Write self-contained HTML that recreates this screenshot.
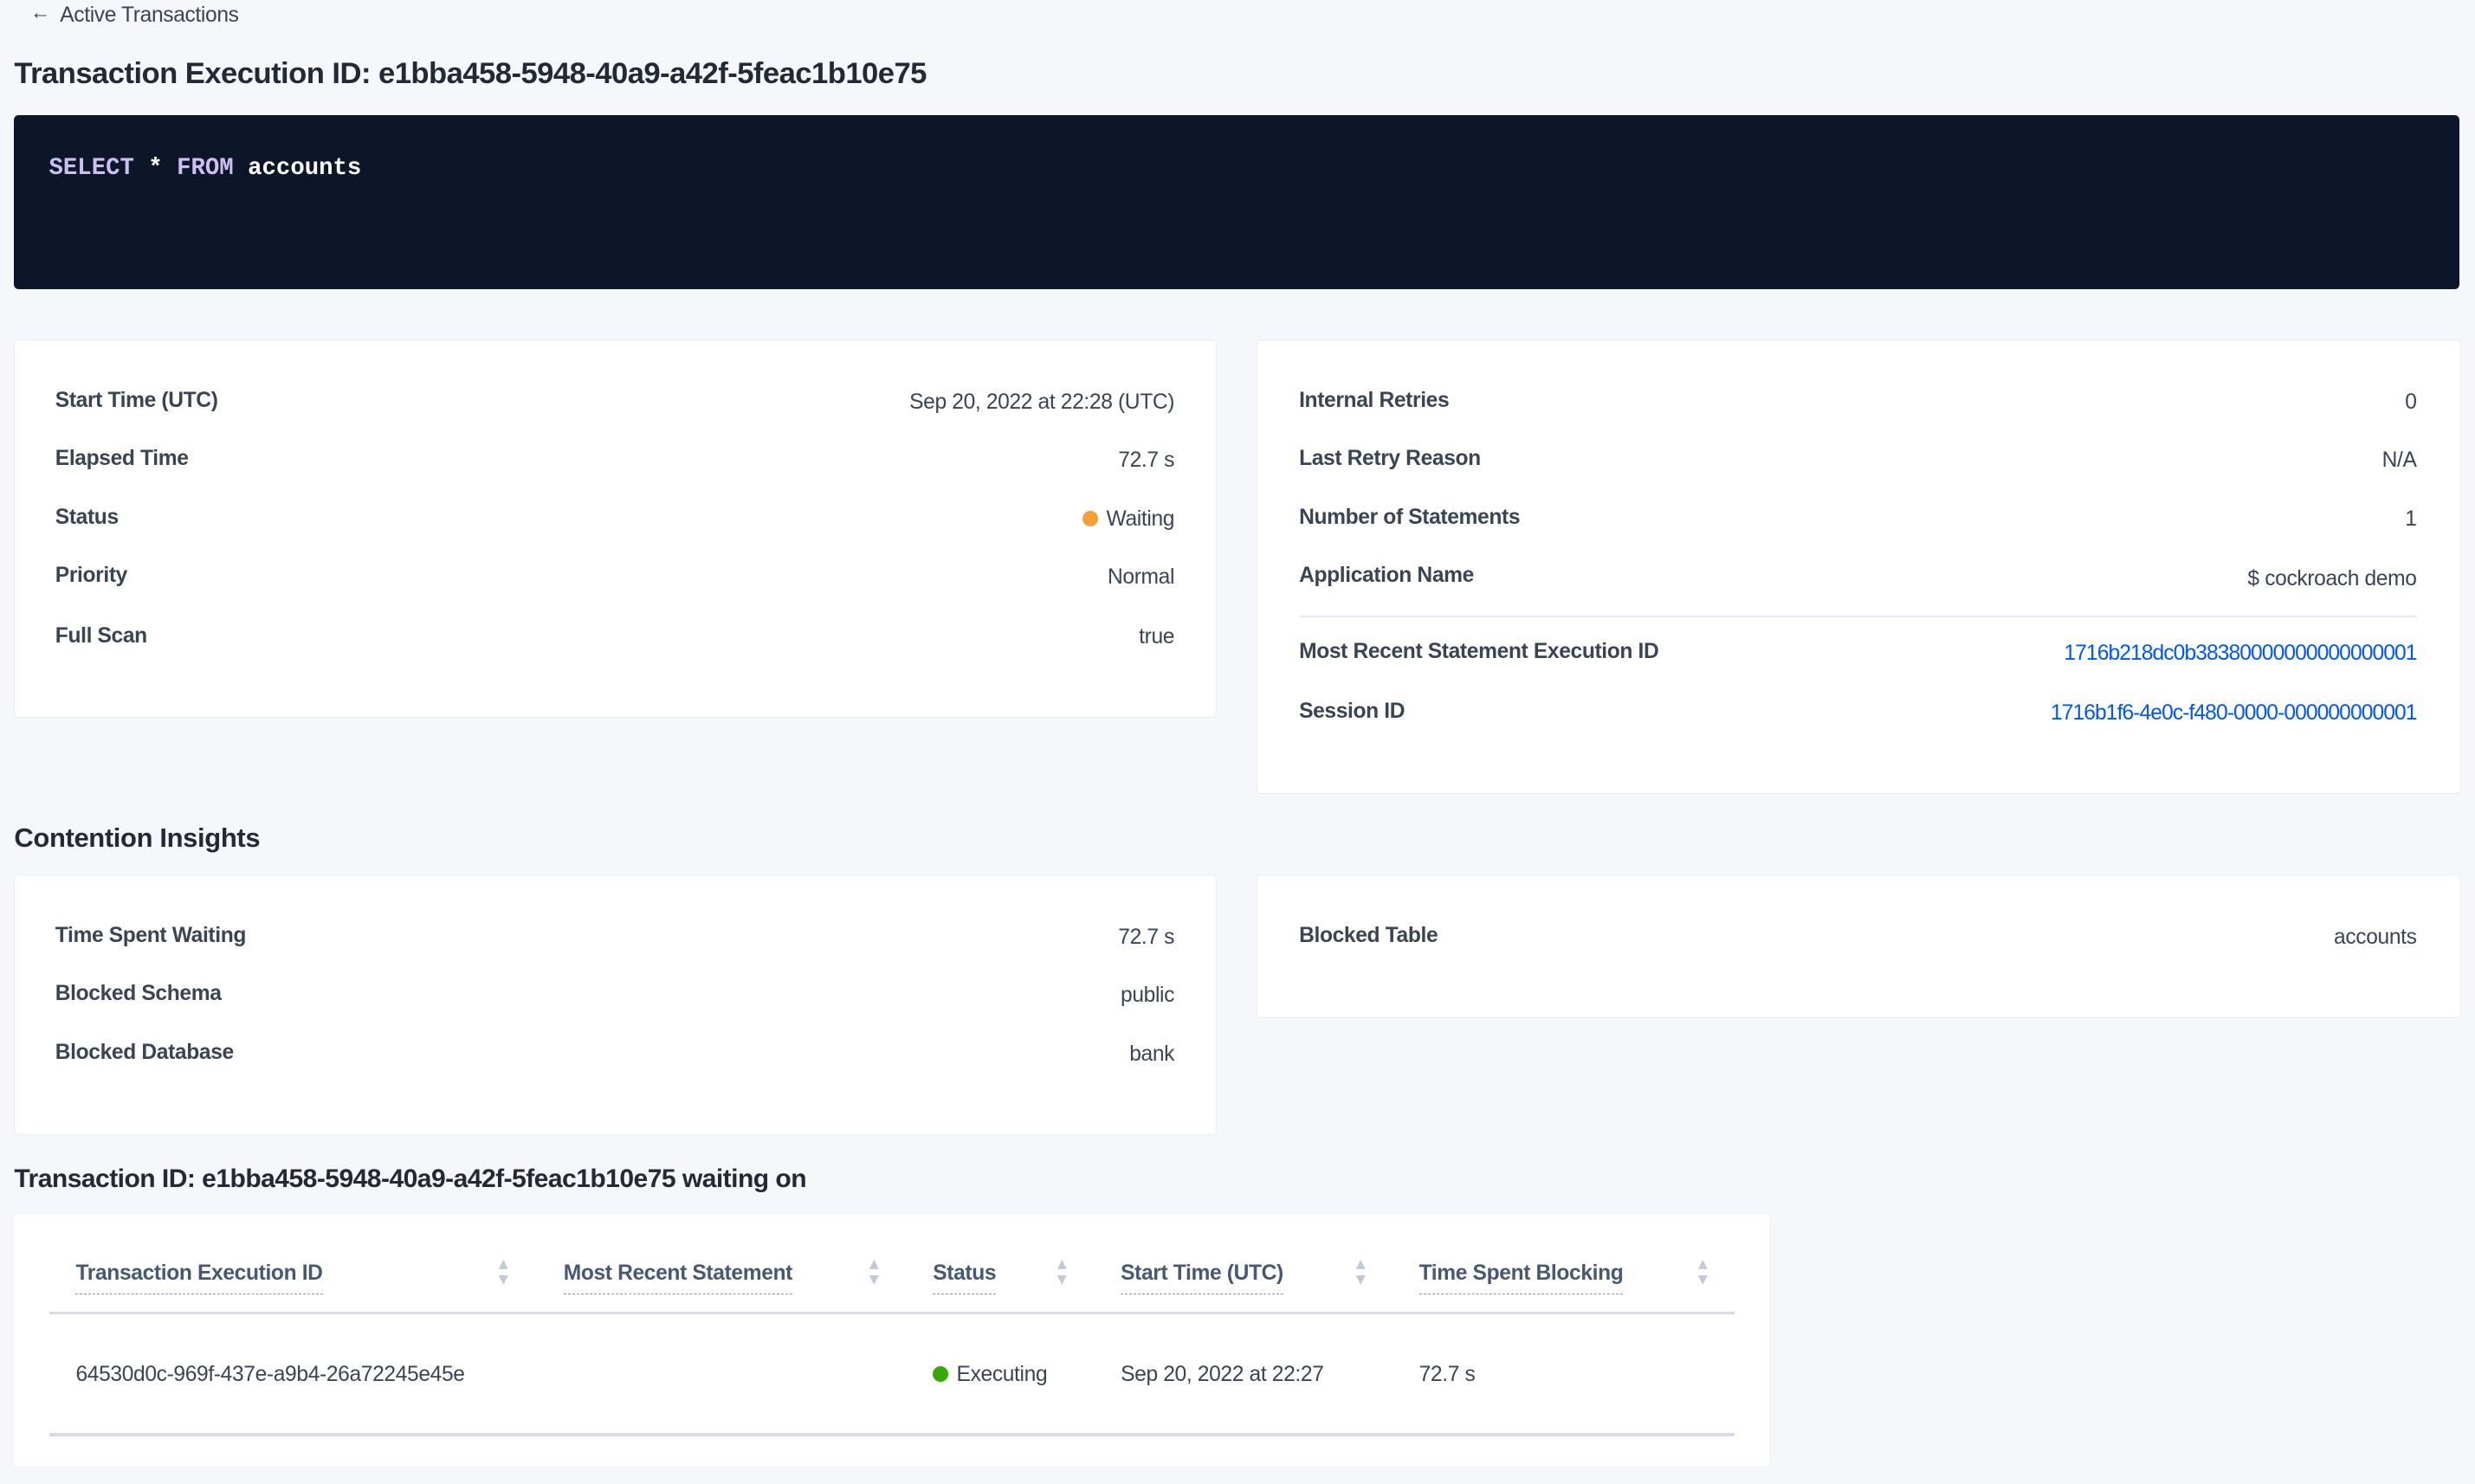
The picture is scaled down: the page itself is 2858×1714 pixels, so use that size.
<!DOCTYPE html>
<html><head><meta charset="utf-8"><style>
html,body{margin:0;padding:0;background:#f5f7fa;}
#w{position:relative;width:1568px;height:940px;zoom:1.82270;font-family:"Liberation Sans",sans-serif;color:#394455;overflow:hidden;}
.a{position:absolute;}
.card{position:absolute;background:#fff;border:1px solid #e7ecf3;border-radius:3px;box-sizing:border-box;}
.lb{position:absolute;font-size:13.5px;font-weight:bold;color:#394455;transform:translateY(-50%);white-space:nowrap;letter-spacing:-0.2px}
.vl{position:absolute;font-size:13.5px;color:#394455;transform:translateY(-50%);white-space:nowrap;text-align:right;letter-spacing:-0.2px}
.lnk{color:#0055ff}
.th{position:absolute;font-size:13.5px;font-weight:bold;color:#475872;transform:translateY(-50%);border-bottom:1px dashed #8a94a8;padding-bottom:5px;top:810px;white-space:nowrap;letter-spacing:-0.2px}
.td{position:absolute;font-size:13.5px;color:#394455;transform:translateY(-50%);top:871px;white-space:nowrap;letter-spacing:-0.2px}
.sort{position:absolute;top:797px;width:8px;height:18px}
</style></head><body><div id="w">
<div class="a" style="left:19px;top:1px;font-size:13px;color:#394455">&#8592;</div>
<div class="a" style="left:38px;top:2px;font-size:13.5px;color:#394455;letter-spacing:-0.2px">Active Transactions</div>
<div class="a" style="left:9px;top:36px;font-size:19px;font-weight:bold;color:#242a35;letter-spacing:-0.3px">Transaction Execution ID: e1bba458-5948-40a9-a42f-5feac1b10e75</div>
<div class="a" style="left:9px;top:73px;width:1549px;height:110px;background:#0d1629;border-radius:3px"></div>
<div class="a" style="left:31px;top:98px;font-family:'Liberation Mono',monospace;font-size:15px;color:#fff;font-weight:bold"><span style="color:#cdbff2">SELECT</span> * <span style="color:#cdbff2">FROM</span> accounts</div>

<div class="card" style="left:9px;top:215px;width:762px;height:240px"></div>
<div class="lb" style="left:35px;top:254px">Start Time (UTC)</div><div class="vl" style="right:824px;top:255px">Sep 20, 2022 at 22:28 (UTC)</div>
<div class="lb" style="left:35px;top:291px">Elapsed Time</div><div class="vl" style="right:824px;top:292px">72.7 s</div>
<div class="lb" style="left:35px;top:328px">Status</div><div class="vl" style="right:824px;top:329px"><span style="display:inline-block;width:10px;height:10px;border-radius:50%;background:#f5a034;margin-right:5px;vertical-align:-1px"></span>Waiting</div>
<div class="lb" style="left:35px;top:365px">Priority</div><div class="vl" style="right:824px;top:366px">Normal</div>
<div class="lb" style="left:35px;top:403px">Full Scan</div><div class="vl" style="right:824px;top:404px">true</div>

<div class="card" style="left:796px;top:215px;width:763px;height:288px"></div>
<div class="lb" style="left:823px;top:254px">Internal Retries</div><div class="vl" style="right:37px;top:255px">0</div>
<div class="lb" style="left:823px;top:291px">Last Retry Reason</div><div class="vl" style="right:37px;top:292px">N/A</div>
<div class="lb" style="left:823px;top:328px">Number of Statements</div><div class="vl" style="right:37px;top:329px">1</div>
<div class="lb" style="left:823px;top:365px">Application Name</div><div class="vl" style="right:37px;top:367px">$ cockroach demo</div>
<div class="a" style="left:823px;top:390px;width:708px;height:1px;background:#e7ecf3"></div>
<div class="lb" style="left:823px;top:413px">Most Recent Statement Execution ID</div><div class="vl lnk" style="right:37px;top:414px;letter-spacing:-0.5px">1716b218dc0b38380000000000000001</div>
<div class="lb" style="left:823px;top:451px">Session ID</div><div class="vl lnk" style="right:37px;top:452px;letter-spacing:-0.5px">1716b1f6-4e0c-f480-0000-000000000001</div>

<div class="a" style="left:9px;top:521px;font-size:17px;font-weight:bold;color:#242a35;letter-spacing:-0.2px">Contention Insights</div>
<div class="card" style="left:9px;top:554px;width:762px;height:165px"></div>
<div class="lb" style="left:35px;top:593px">Time Spent Waiting</div><div class="vl" style="right:824px;top:594px">72.7 s</div>
<div class="lb" style="left:35px;top:630px">Blocked Schema</div><div class="vl" style="right:824px;top:631px">public</div>
<div class="lb" style="left:35px;top:667px">Blocked Database</div><div class="vl" style="right:824px;top:668px">bank</div>
<div class="card" style="left:796px;top:554px;width:763px;height:91px"></div>
<div class="lb" style="left:823px;top:593px">Blocked Table</div><div class="vl" style="right:37px;top:594px">accounts</div>

<div class="a" style="left:9px;top:738px;font-size:16.5px;font-weight:bold;color:#242a35;letter-spacing:-0.3px">Transaction ID: e1bba458-5948-40a9-a42f-5feac1b10e75 waiting on</div>
<div class="a" style="left:9px;top:770px;width:1112px;height:159px;background:#fff"></div>
<div class="th" style="left:48px">Transaction Execution ID</div>
<div class="th" style="left:357px">Most Recent Statement</div>
<div class="th" style="left:591px">Status</div>
<div class="th" style="left:710px">Start Time (UTC)</div>
<div class="th" style="left:899px">Time Spent Blocking</div>
<svg class="sort" style="left:315px" viewBox="0 0 8 18"><path d="M4 1L7 7H1Z M4 17L7 11H1Z" fill="#c2c9d9"/></svg>
<svg class="sort" style="left:550px" viewBox="0 0 8 18"><path d="M4 1L7 7H1Z M4 17L7 11H1Z" fill="#c2c9d9"/></svg>
<svg class="sort" style="left:669px" viewBox="0 0 8 18"><path d="M4 1L7 7H1Z M4 17L7 11H1Z" fill="#c2c9d9"/></svg>
<svg class="sort" style="left:858px" viewBox="0 0 8 18"><path d="M4 1L7 7H1Z M4 17L7 11H1Z" fill="#c2c9d9"/></svg>
<svg class="sort" style="left:1075px" viewBox="0 0 8 18"><path d="M4 1L7 7H1Z M4 17L7 11H1Z" fill="#c2c9d9"/></svg>
<div class="a" style="left:31px;top:831px;width:1068px;height:2px;background:#d6dbe7"></div>
<div class="td" style="left:48px">64530d0c-969f-437e-a9b4-26a72245e45e</div>
<div class="td" style="left:591px"><span style="display:inline-block;width:10px;height:10px;border-radius:50%;background:#37a806;margin-right:5px;vertical-align:-1px"></span>Executing</div>
<div class="td" style="left:710px">Sep 20, 2022 at 22:27</div>
<div class="td" style="left:899px">72.7 s</div>
<div class="a" style="left:31px;top:908px;width:1068px;height:2px;background:#d6dbe7"></div>
</div></body></html>
